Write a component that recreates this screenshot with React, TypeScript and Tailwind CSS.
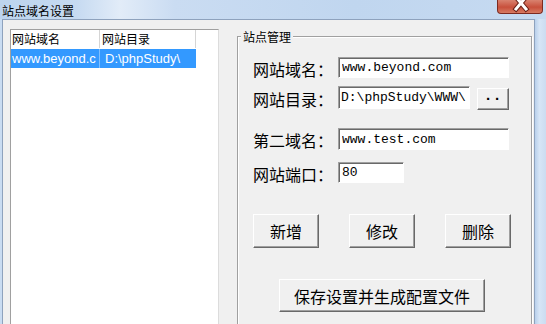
import React from "react";

const cjk = "font-['Noto_Sans_CJK_SC',sans-serif]";
const mono = "font-['Liberation_Mono',monospace]";

const sunken =
  "border border-[#a0a0a0] border-r-white border-b-white shadow-[inset_1px_1px_0_#696969] bg-white";
const raised =
  "border border-white border-r-[#696969] border-b-[#696969] shadow-[inset_-1px_-1px_0_#a0a0a0] bg-[#f0f0f0]";

const Field = ({ label, value, width }: { label: string; value: string; width: string }) => (
  <div className="flex items-center h-full">
    <span className={`${cjk} w-[85px] text-[16px] leading-[20px] pt-[2px] text-black`}>{label}</span>
    <input
      readOnly
      value={value}
      className={`${sunken} ${mono} ${width} h-full pl-[3px] text-[13px] text-black outline-none`}
    />
  </div>
);

const App = () => {
  return (
    <div className="w-[546px] h-[324px] overflow-hidden flex flex-col bg-[#c6daf1]">
      {/* title bar */}
      <div className="h-[22px] flex items-start bg-[linear-gradient(90deg,#bcd4ee_0%,#c6daf1_14%,#e2ecf8_22%,#cadcf2_32%,#c0d6ef_65%,#c6daf1_100%)]">
        <span className={`${cjk} pl-[2px] pt-[3px] text-[12px] leading-[16px] text-black`}>站点域名设置</span>
        <div className="ml-auto mr-[3px] w-[46px] h-[14px] rounded-b-[4px] border border-t-0 border-[#7d2a20] bg-[linear-gradient(180deg,#d9826f_0%,#c8503c_55%,#d77a62_100%)] overflow-hidden">
          <svg width="46" height="13" viewBox="0 0 46 13">
            <path d="M18 -3 L28 9 M28 -3 L18 9" stroke="#6a2016" strokeWidth="5" strokeLinecap="square" />
            <path d="M18 -3 L28 9 M28 -3 L18 9" stroke="#ffffff" strokeWidth="3" strokeLinecap="square" />
          </svg>
        </div>
      </div>

      <div className="flex flex-1">
        <div className="w-[2px] bg-[#c9dcf2]" />
        {/* client area */}
        <div className="flex-1 flex items-start border-t border-l border-r border-[#8ea2bd] bg-[#f0f0f0] pl-[7px] pt-[9px]">
          {/* list view */}
          <div className="w-[209px] h-[300px] border border-[#a0a0a0] border-r-[#dcdcdc] bg-white">
            <div className={`${cjk} flex h-[18px] text-[12px] leading-[18px] text-black`}>
              <div className="w-[89px] pl-[1px] border-r border-[#d5d5d5]">网站域名</div>
              <div className="w-[96px] pl-[2px] border-r border-[#d5d5d5]">网站目录</div>
            </div>
            <div className="flex w-[185px] h-[19px] mt-[1px] bg-[#3399ff] text-white text-[13px] leading-[19px] font-['Liberation_Sans',sans-serif]">
              <div className="w-[89px] pl-[1px] overflow-hidden whitespace-nowrap border-r border-[#7fbfff]">www.beyond.c</div>
              <div className="w-[96px] pl-[5px] overflow-hidden whitespace-nowrap">D:\phpStudy\</div>
            </div>
          </div>

          {/* group box */}
          <fieldset className="ml-[18px] w-[295px] h-[300px] border border-[#a0a0a0] shadow-[inset_1px_1px_0_#fff,1px_1px_0_#fff]">
            <legend className={`${cjk} ml-[3px] px-[2px] bg-[#f0f0f0] text-[12px] leading-[15px] text-black`}>站点管理</legend>
            <div className="pl-[15px] flex flex-col">
              <div className="mt-[13px] h-[21px]">
                <Field label="网站域名：" value="www.beyond.com" width="w-[171px]" />
              </div>
              <div className="mt-[8px] h-[23px] flex items-center">
                <span className={`${cjk} w-[85px] text-[16px] leading-[20px] pt-[2px] text-black`}>网站目录：</span>
                <input
                  readOnly
                  value="D:\phpStudy\WWW\"
                  className={`${sunken} ${mono} w-[132px] h-full pl-[2px] text-[13px] text-black outline-none`}
                />
                <button className={`${raised} ml-[7px] w-[32px] h-[22px] mt-[2px] text-[15px] leading-[15px] font-bold text-black font-['Liberation_Sans',sans-serif]`}>
                  · ·
                </button>
              </div>
              <div className="mt-[19px] h-[22px]">
                <Field label="第二域名：" value="www.test.com" width="w-[171px]" />
              </div>
              <div className="mt-[12px] h-[21px]">
                <Field label="网站端口：" value="80" width="w-[66px]" />
              </div>

              <div className="mt-[31px] w-[258px] flex justify-between">
                {["新增", "修改", "删除"].map((t) => (
                  <button key={t} className={`${raised} ${cjk} w-[66px] h-[34px] text-[16px] text-black`}>
                    {t}
                  </button>
                ))}
              </div>
              <div className="mt-[31px] w-[258px] flex justify-center">
                <button className={`${raised} ${cjk} w-[206px] h-[33px] text-[16px] text-black`}>
                  保存设置并生成配置文件
                </button>
              </div>
            </div>
          </fieldset>
        </div>
        <div className="w-[11px] bg-[linear-gradient(90deg,#b9d0eb_0%,#d6e5f6_40%,#cbdcf1_100%)]" />
      </div>
    </div>
  );
};

export default App;
